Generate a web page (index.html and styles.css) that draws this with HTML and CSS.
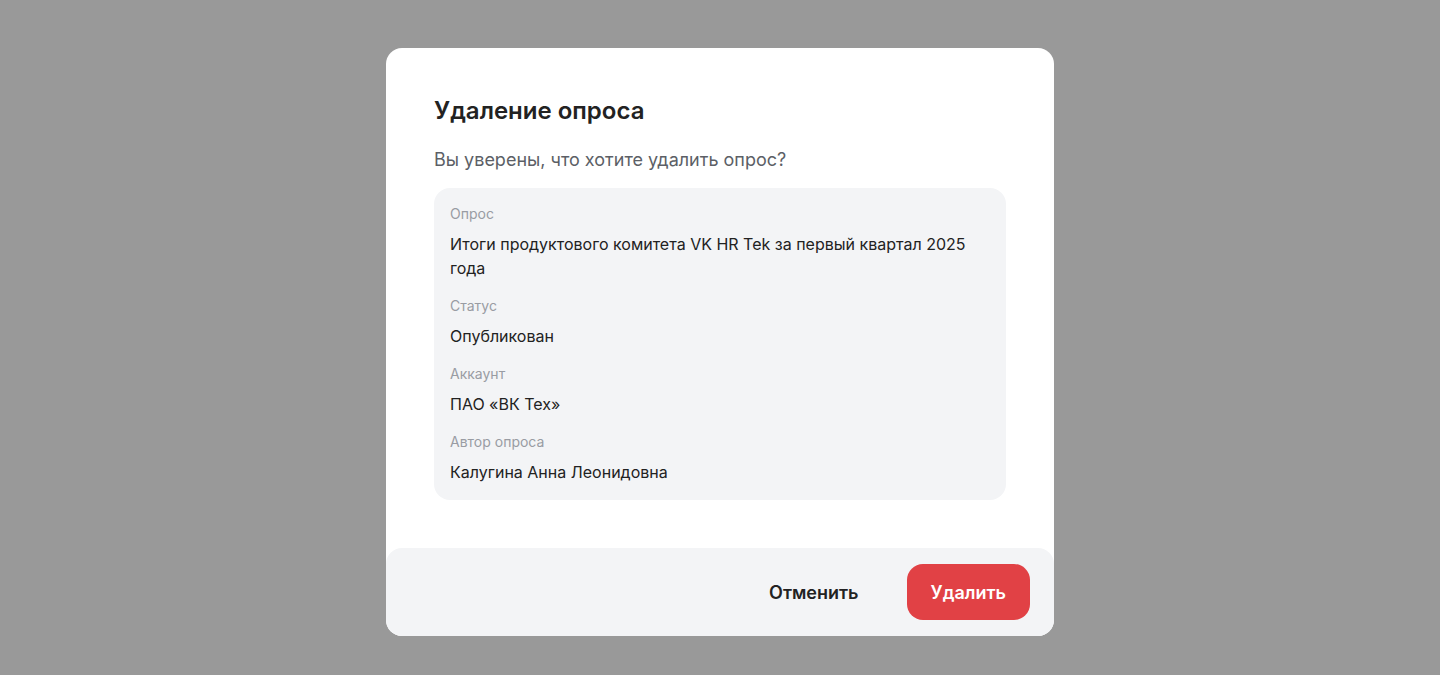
FILE: index.html
```html
<!DOCTYPE html>
<html lang="ru">
<head>
<meta charset="utf-8">
<link rel="stylesheet" href="styles.css">
</head>
<body>
<div class="overlay">
  <div class="modal">
    <div class="modal-body">
      <h2 class="title">Удаление опроса</h2>
      <p class="subtitle">Вы уверены, что хотите удалить опрос?</p>
      <div class="info">
        <div class="field">
          <div class="label">Опрос</div>
          <div class="value">Итоги продуктового комитета VK HR Tek за первый квартал 2025 года</div>
        </div>
        <div class="field">
          <div class="label">Статус</div>
          <div class="value">Опубликован</div>
        </div>
        <div class="field">
          <div class="label">Аккаунт</div>
          <div class="value">ПАО «ВК Тех»</div>
        </div>
        <div class="field">
          <div class="label">Автор опроса</div>
          <div class="value">Калугина Анна Леонидовна</div>
        </div>
      </div>
    </div>
    <div class="modal-footer">
      <button class="btn btn-cancel">Отменить</button>
      <button class="btn btn-danger">Удалить</button>
    </div>
  </div>
</div>
</body>
</html>
```

FILE: styles.css
```css
* { box-sizing: border-box; }
html, body { margin: 0; padding: 0; }
body {
  font-family: Inter, "Noto Sans", sans-serif;
  background: #999999;
  color: #222222;
}
.overlay {
  min-height: 675px;
  display: flex;
  justify-content: center;
  align-items: flex-start;
  padding-top: 48px;
}
.modal {
  width: 668px;
  background: #ffffff;
  border-radius: 16px;
  overflow: hidden;
}
.modal-body {
  padding: 48px 48px 48px;
}
.title {
  margin: 0;
  font-size: 24px;
  line-height: 30px;
  font-weight: 600;
  color: #222222;
}
.subtitle {
  margin: 22px 0 0;
  font-size: 18px;
  line-height: 24px;
  font-weight: 400;
  color: #5c5f66;
}
.info {
  margin-top: 16px;
  background: #f3f4f6;
  border-radius: 16px;
  padding: 16px;
  display: flex;
  flex-direction: column;
  gap: 16px;
}
.field {
  display: flex;
  flex-direction: column;
  gap: 8px;
}
.label {
  font-size: 14px;
  line-height: 20px;
  color: #999ca3;
}
.value {
  font-size: 16px;
  line-height: 24px;
  color: #222222;
  padding-right: 16px;
}
.modal-footer {
  background: #f3f4f6;
  border-radius: 16px 16px 0 0;
  padding: 16px 24px;
  display: flex;
  justify-content: flex-end;
  gap: 24px;
}
.btn {
  height: 56px;
  padding: 0 24px;
  border: none;
  border-radius: 16px;
  font-family: Inter, "Noto Sans", sans-serif;
  font-size: 18px;
  font-weight: 600;
  cursor: pointer;
}
.btn-cancel {
  background: transparent;
  color: #222222;
}
.btn-danger {
  background: #e14145;
  color: #ffffff;
}
```
